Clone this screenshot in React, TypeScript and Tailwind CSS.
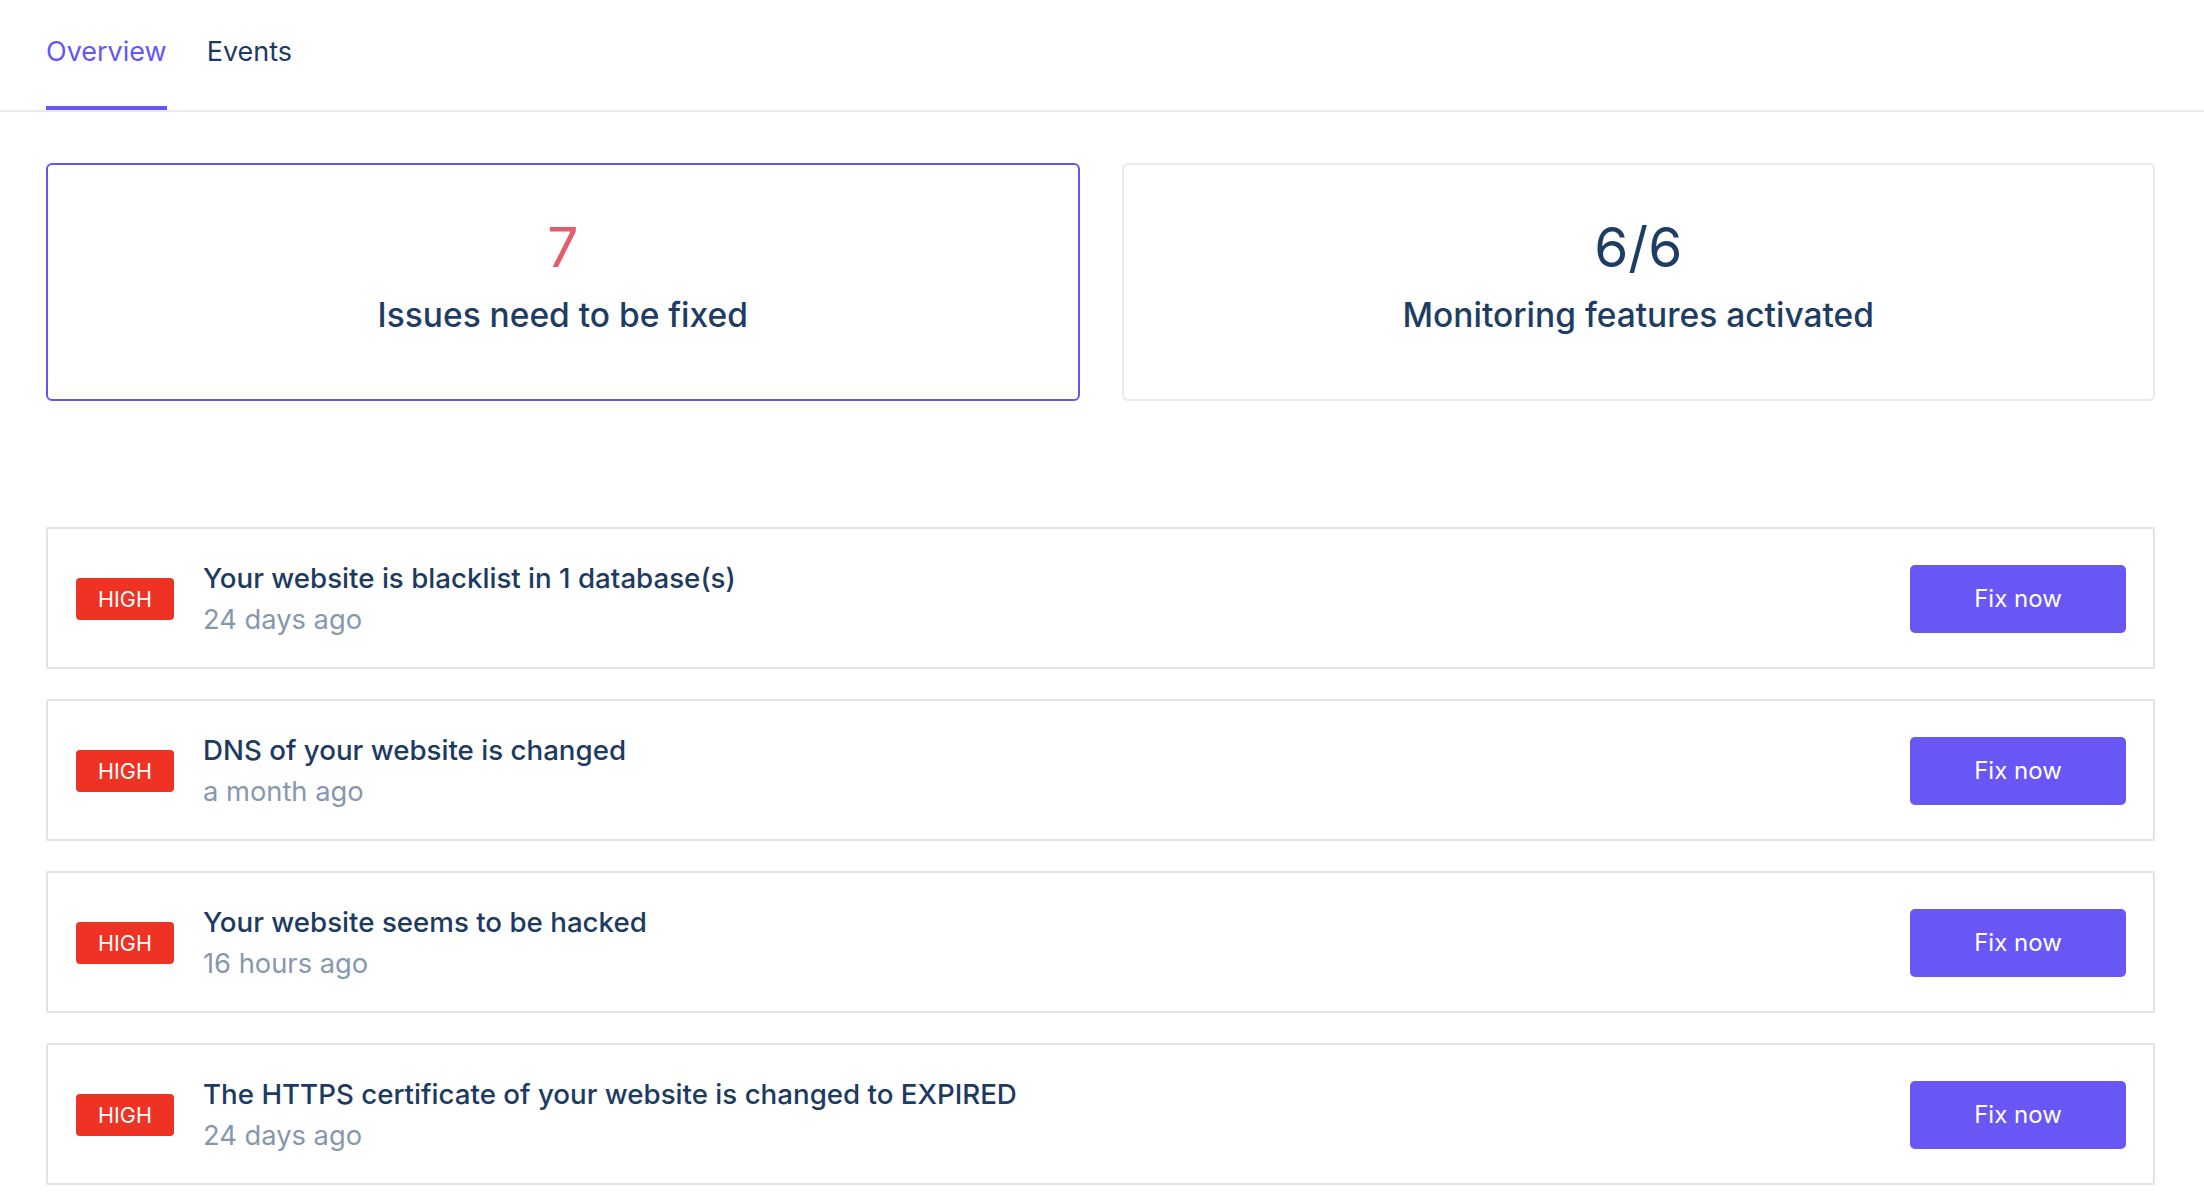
import React from "react";

type Issue = { title: string; time: string };

const issues: Issue[] = [
  { title: "Your website is blacklist in 1 database(s)", time: "24 days ago" },
  { title: "DNS of your website is changed", time: "a month ago" },
  { title: "Your website seems to be hacked", time: "16 hours ago" },
  { title: "The HTTPS certificate of your website is changed to EXPIRED", time: "24 days ago" },
];

function Tabs() {
  return (
    <div className="flex gap-10 pl-[46px] border-b-2 border-[#e9eaf0]">
      <button className="h-[110px] pt-[35px] flex items-start border-b-4 border-[#6557f5] text-[27px] leading-[34px] text-[#6557f5]">
        Overview
      </button>
      <button className="h-[110px] pt-[35px] flex items-start border-b-4 border-transparent text-[27px] leading-[34px] text-[#1e3a5f]">
        Events
      </button>
    </div>
  );
}

function StatCard({ value, label, active, valueColor }: { value: string; label: string; active?: boolean; valueColor: string }) {
  return (
    <div
      className={`h-[238px] rounded-[6px] border-2 flex flex-col items-center justify-center gap-[14px] pb-[12px] ${
        active ? "border-[#6457f0]" : "border-[#e6e9ed]"
      }`}
    >
      <div className={`text-[55px] leading-[64px] ${valueColor}`}>{value}</div>
      <div className="text-[33.5px] leading-[44px] font-medium text-[#1e3d64]">{label}</div>
    </div>
  );
}

function IssueRow({ issue }: { issue: Issue }) {
  return (
    <div className="h-[142px] rounded-[2px] border-2 border-[#dfe3e8] flex items-center pl-[28px] pr-[27px] pt-[2px]">
      <span className="w-[98px] h-[42px] rounded-[4px] bg-[#ee3224] text-white text-[21.5px] flex items-center justify-center shrink-0">
        HIGH
      </span>
      <div className="ml-[29px] flex-1 flex flex-col">
        <span className="text-[27.7px] leading-[42px] font-medium text-[#1d3b61]">{issue.title}</span>
        <span className="text-[27.3px] leading-[42px] text-[#8797b0]">{issue.time}</span>
      </div>
      <button className="w-[216px] h-[68px] rounded-[5px] bg-[#6857f5] text-white text-[24px] shrink-0">
        Fix now
      </button>
    </div>
  );
}

export default function App() {
  return (
    <div className="min-h-screen bg-white" style={{ fontFamily: "Inter, 'Noto Sans', sans-serif" }}>
      <Tabs />
      <div className="pl-[46px] pr-[49px] pt-[51px]">
        <div className="grid grid-cols-2 gap-[42px]">
          <StatCard value="7" label="Issues need to be fixed" active valueColor="text-[#e35d6b]" />
          <StatCard value="6/6" label="Monitoring features activated" valueColor="text-[#1e3d64]" />
        </div>
        <div className="mt-[126px] flex flex-col gap-[30px]">
          {issues.map((issue, i) => (
            <IssueRow key={i} issue={issue} />
          ))}
        </div>
      </div>
    </div>
  );
}
